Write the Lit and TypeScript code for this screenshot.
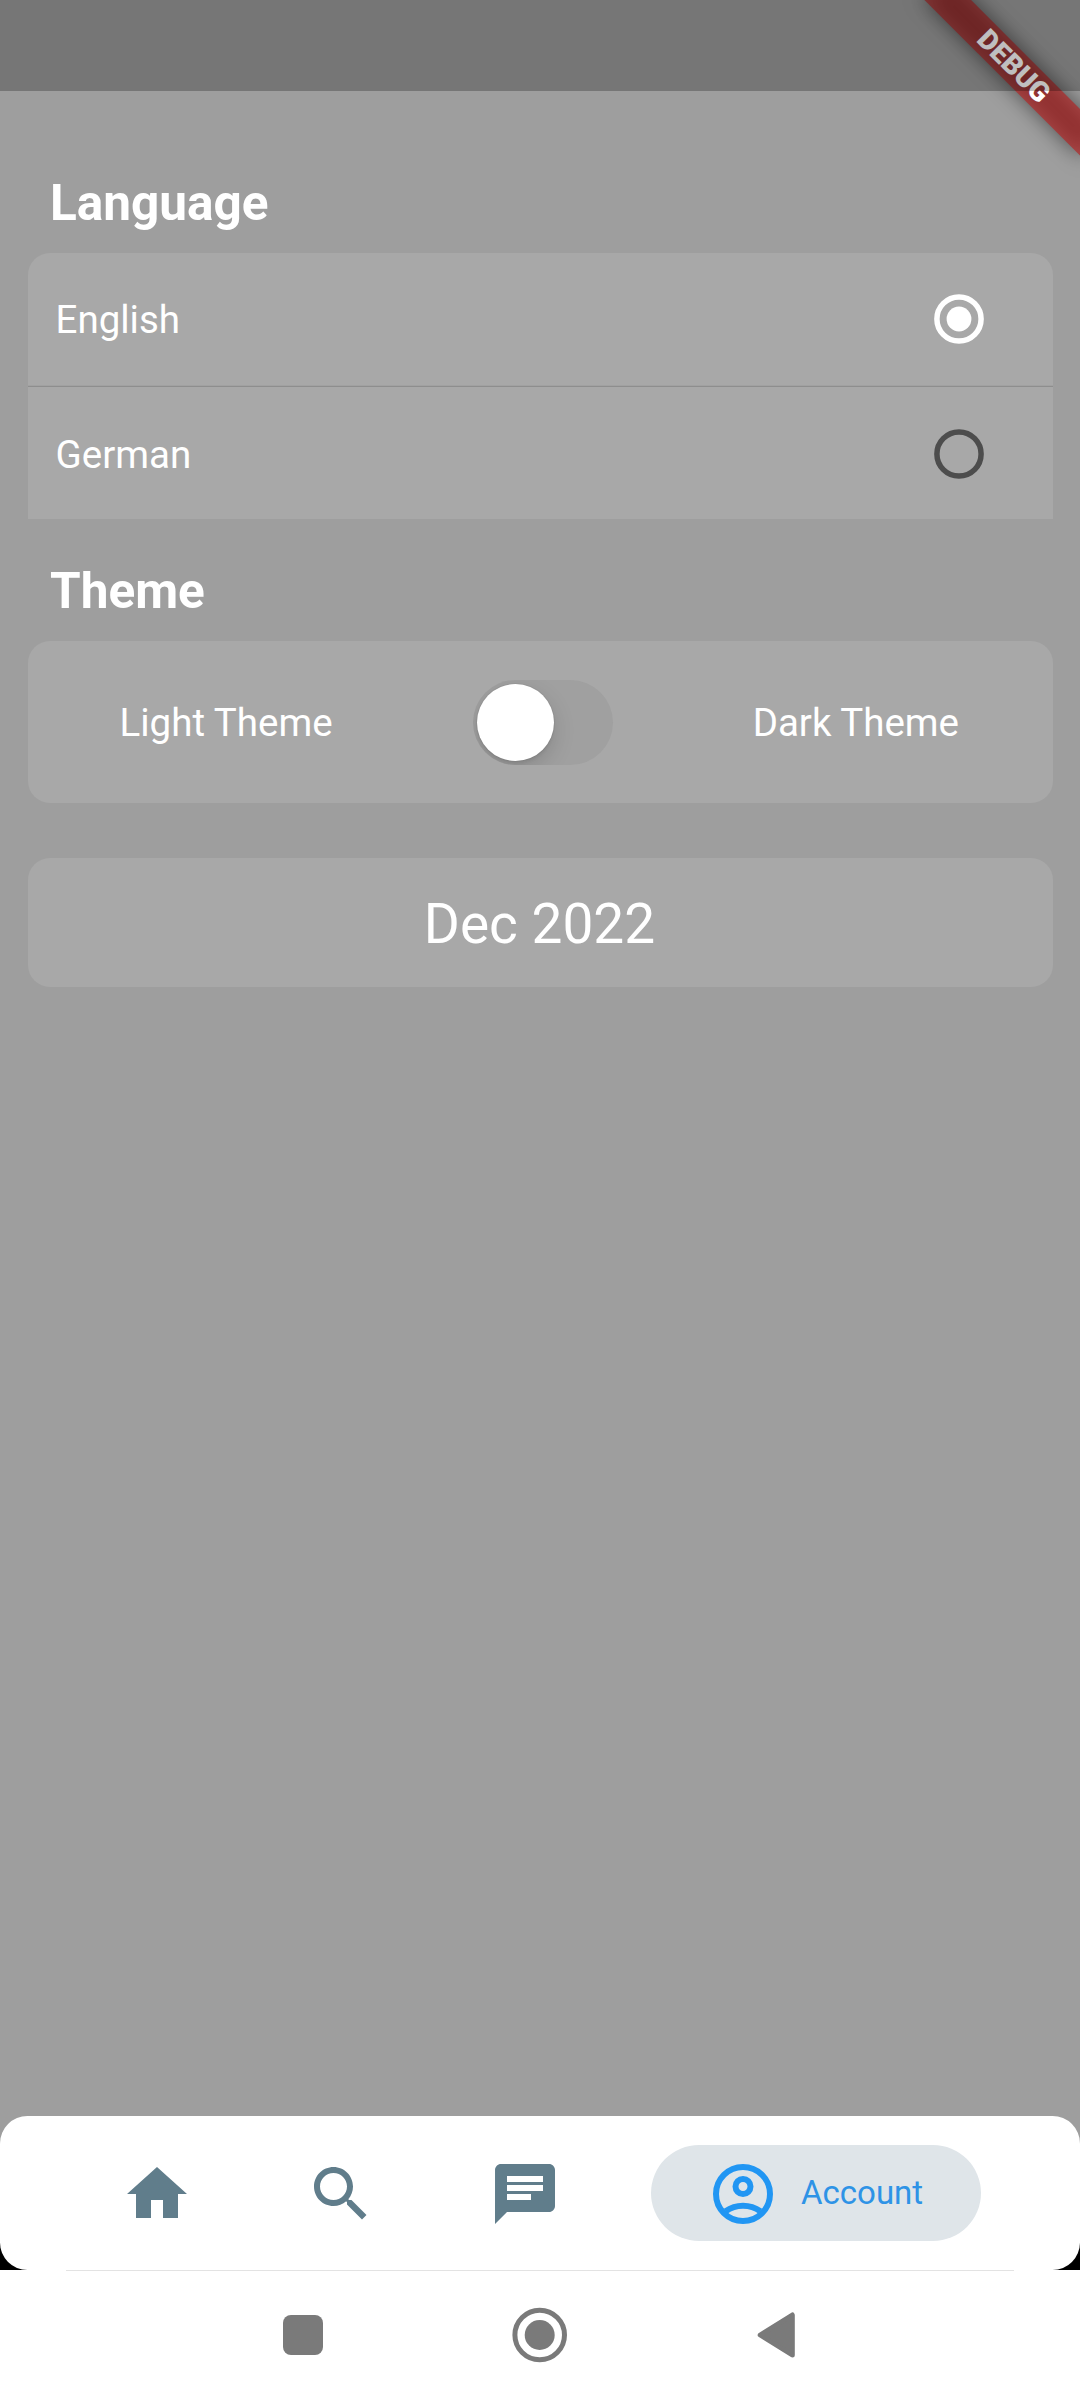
import { LitElement, html, css, svg } from "lit";
import { customElement, property } from "lit/decorators.js";
import { classMap } from "lit/directives/class-map.js";

const ICONS: Record<string, string> = {
  home: "M10 20v-6h4v6h5v-8h3L12 3 2 12h3v8z",
  search:
    "M15.5 14h-.79l-.28-.27C15.41 12.59 16 11.11 16 9.5 16 5.91 13.09 3 9.5 3S3 5.91 3 9.5 5.91 16 9.5 16c1.61 0 3.09-.59 4.23-1.57l.27.28v.79l5 4.99L20.49 19l-4.99-5zm-6 0C7.01 14 5 11.99 5 9.5S7.01 5 9.5 5 14 7.01 14 9.5 11.99 14 9.5 14z",
  chat: "M20 2H4c-1.1 0-1.99.9-1.99 2L2 22l4-4h14c1.1 0 2-.9 2-2V4c0-1.1-.9-2-2-2zM6 9h12v2H6V9zm8 5H6v-2h8v2zm4-6H6V6h12v2z",
};

@customElement("nav-icon")
export class NavIcon extends LitElement {
  @property() name = "home";

  static styles = css`
    :host { display: block; width: 72px; height: 72px; }
    .glyph { display: block; width: 72px; height: 72px; fill: currentColor; }
    .line { fill: none; stroke: currentColor; stroke-width: 2; }
  `;

  render() {
    return html`<svg class="glyph" viewBox="0 0 24 24">
      ${this.name === "account"
        ? svg`<circle class="line" cx="12" cy="12" r="9"/>
            <circle class="line" cx="12" cy="9.5" r="2.5"/>
            <path class="line" d="M6.2 17.75C7.8 16.6 9.8 15.9 12 15.9s4.2.7 5.8 1.85"/>`
        : svg`<path d=${ICONS[this.name]}/>`}
    </svg>`;
  }
}

@customElement("radio-mark")
export class RadioMark extends LitElement {
  @property({ type: Boolean }) selected = false;

  static styles = css`
    :host { display: block; }
    .mark { display: block; width: 50px; height: 50px; color: #4d4d4d; }
    .on { color: #fff; }
    .ring { fill: none; stroke: currentColor; stroke-width: 5.5; }
    .dot { fill: currentColor; }
  `;

  render() {
    return html`<svg class=${classMap({ mark: true, on: this.selected })} viewBox="0 0 50 50">
      <circle class="ring" cx="25" cy="25" r="22.1"/>
      ${this.selected ? svg`<circle class="dot" cx="25" cy="25" r="12.4"/>` : null}
    </svg>`;
  }
}

@customElement("app-root")
export class AppRoot extends LitElement {
  static styles = css`
    :host {
      display: flex; flex-direction: column; position: relative; overflow: hidden;
      width: 1080px; height: 2400px; background: #9e9e9e; color: #fff;
      font-family: Roboto, "Liberation Sans", sans-serif;
    }
    .banner { position: absolute; left: 1080px; top: 0; width: 0; height: 0; transform: rotate(45deg); }
    .banner-shadow, .banner-ribbon { position: absolute; left: -110px; top: 77px; width: 220px; height: 33px; }
    .banner-shadow { background: rgba(0, 0, 0, 0.5); filter: blur(10.9px); }
    .banner-ribbon {
      background: rgba(183, 28, 28, 0.627); text-align: center;
      font-size: 28.05px; line-height: 33px; font-weight: 900;
    }
    .status { height: 91px; flex: none; background: rgba(0, 0, 0, 0.25); position: relative; }
    .content { flex: 1; padding: 80px 27px 0 28px; }
    .heading { margin: 0; padding-left: 22px; font-size: 49.5px; line-height: 64px; font-weight: 700; height: 82px; }
    .card { background: #a8a8a8; border-radius: 22px; }
    .options { border-radius: 22px 22px 0 0; height: 266px; margin-bottom: 40px; }
    .option {
      display: flex; align-items: center; justify-content: space-between;
      height: 132px; padding: 0 69px 0 27.5px; box-sizing: border-box; font-size: 38.5px;
    }
    .divider { height: 2px; background: linear-gradient(#a1a1a1 50%, #8e8e8e 50%); }
    .option.last { height: 133px; padding-top: 1px; }
    .themes {
      display: flex; align-items: center; justify-content: space-between;
      height: 162px; padding: 0 94px 0 91.5px; box-sizing: border-box; font-size: 38.5px;
    }
    .track {
      width: 140px; height: 85px; border-radius: 43px; background: #a0a0a0; overflow: hidden;
      box-sizing: border-box; padding: 4px;
    }
    .thumb {
      width: 77px; height: 77px; border-radius: 50%; background: #fff;
      box-shadow: 0 8px 22px rgba(0, 0, 0, 0.15), 0 3px 3px rgba(0, 0, 0, 0.06), 0 0 0 1px rgba(0, 0, 0, 0.04);
    }
    .month {
      margin-top: 55px; height: 129px; padding: 2px 2px 0 0; box-sizing: border-box;
      display: grid; place-items: center; font-size: 55px;
    }
    .nav-back { flex: none; background: linear-gradient(#9e9e9e 50%, #000 50%); }
    .nav {
      display: flex; align-items: center; height: 154px; background: #fff; border-radius: 27.5px;
      padding: 0 65px; box-sizing: border-box; color: #607d8b;
    }
    .item { display: flex; align-items: center; height: 96px; padding: 2px 56px 0; box-sizing: border-box; border-radius: 48px; }
    .active { width: 330px; margin-left: 34px; padding-right: 0; background: #dfe5e9; color: #2196f3; gap: 22px; }
    .label { font-size: 33px; line-height: 40px; margin-top: -2px; color: #2e93e6; }
    .system { flex: none; height: 130px; background: #fff; }
    .rule { height: 1px; margin: 0 66px; background: #e3e3e3; }
    .keys { display: flex; justify-content: center; align-items: center; height: 127px; }
    .keys-art { display: block; width: 540px; height: 60px; fill: #7a7a7a; }
    .key-ring { fill: none; stroke: #7a7a7a; stroke-width: 5; }
    .key-back { stroke: #7a7a7a; stroke-width: 5; stroke-linejoin: round; }
  `;

  render() {
    return html`
      <div class="banner">
        <div class="banner-shadow"></div>
        <div class="banner-ribbon">DEBUG</div>
      </div>
      <div class="status"></div>
      <main class="content">
        <h2 class="heading">Language</h2>
        <section class="card options">
          <div class="option"><span>English</span><radio-mark selected></radio-mark></div>
          <div class="divider"></div>
          <div class="option last"><span>German</span><radio-mark></radio-mark></div>
        </section>
        <h2 class="heading">Theme</h2>
        <section class="card themes">
          <span>Light Theme</span>
          <div class="track"><div class="thumb"></div></div>
          <span>Dark Theme</span>
        </section>
        <section class="card month">Dec 2022</section>
      </main>
      <div class="nav-back">
        <nav class="nav">
          ${["home", "search", "chat"].map(
            (name) => html`<div class="item"><nav-icon name=${name}></nav-icon></div>`
          )}
          <div class="item active">
            <nav-icon name="account"></nav-icon><span class="label">Account</span>
          </div>
        </nav>
      </div>
      <footer class="system">
        <div class="rule"></div>
        <div class="keys">
          <svg class="keys-art" viewBox="0 0 540 60">
            <rect x="13" y="10" width="40" height="40" rx="8"/>
            <circle class="key-ring" cx="269.7" cy="30" r="24.8"/>
            <circle cx="269.7" cy="30" r="15"/>
            <path class="key-back" d="M490.2 30L522.3 10V50z"/>
          </svg>
        </div>
      </footer>
    `;
  }
}
